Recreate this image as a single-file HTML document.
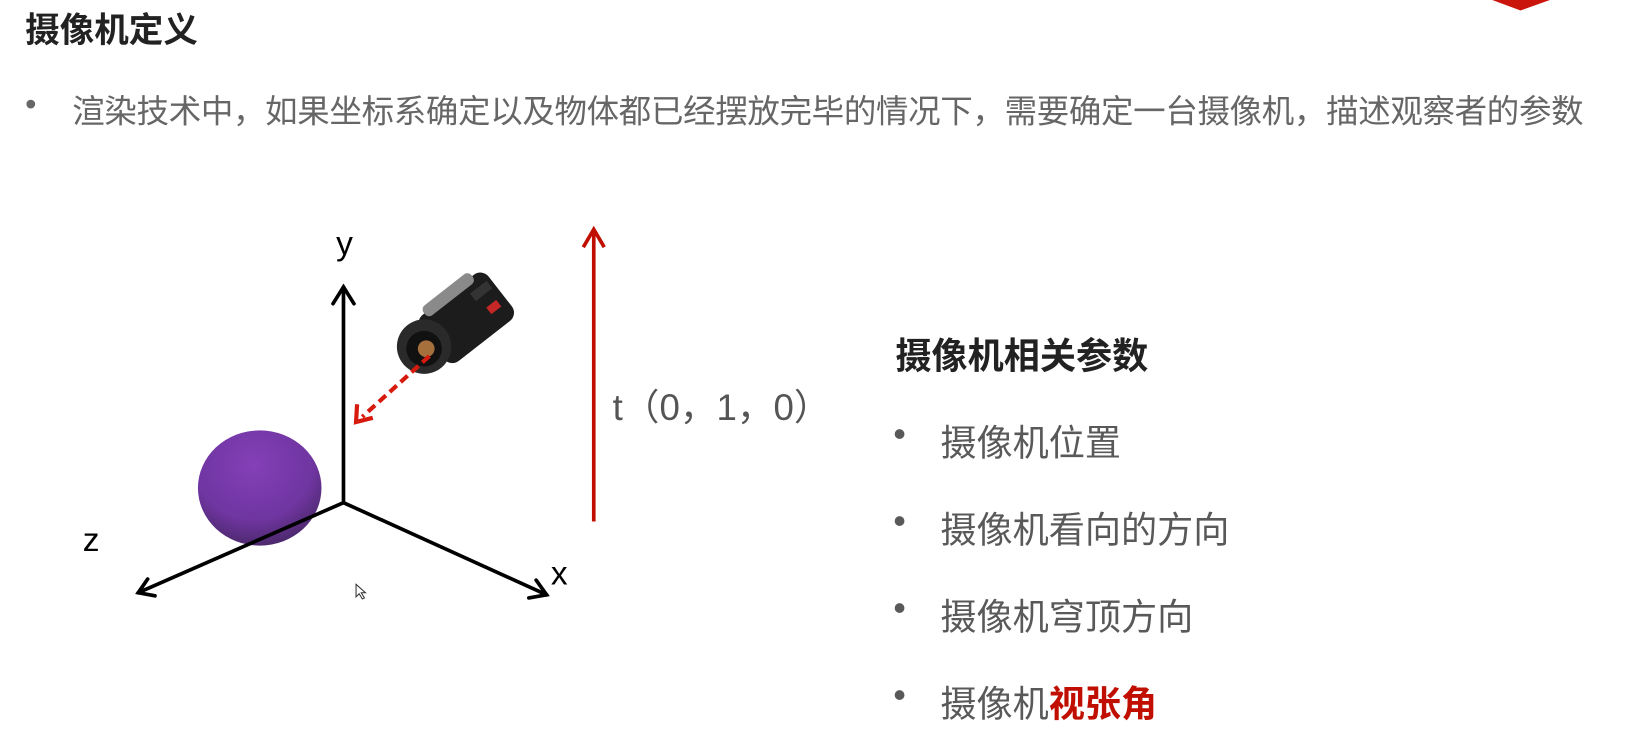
<!DOCTYPE html>
<html><head><meta charset="utf-8"><style>
body{margin:0;width:1642px;height:752px;background:#fff;position:relative;overflow:hidden;font-family:"Liberation Sans","Noto Sans CJK SC",sans-serif}
#w{position:absolute;left:0;top:0;width:1568px;height:718px;transform:scale(1.0472);transform-origin:0 0}
.t{position:absolute;white-space:nowrap}
</style></head><body><div id="w">
<svg width="1568" height="718" style="position:absolute;left:0;top:0">
<defs>
<radialGradient id="sp" cx="0.45" cy="0.3" r="0.8">
<stop offset="0" stop-color="#8440b8"/><stop offset="0.6" stop-color="#6f35a0"/><stop offset="1" stop-color="#3f2458"/></radialGradient>
</defs>
<polygon points="1425,0 1480,0 1452,10" fill="#c9150c"/>
<ellipse cx="248" cy="466" rx="59" ry="55" fill="url(#sp)"/>
<g stroke="#000" stroke-width="3.5" fill="none" stroke-linecap="round">
<line x1="328" y1="480" x2="328" y2="274"/><path d="M318,290 L328,274 L338,290"/>
<line x1="328" y1="480" x2="522" y2="568"/><path d="M505,571 L522,568 L512,554"/>
<line x1="328" y1="480" x2="132" y2="566"/><path d="M148,569 L132,566 L141,553"/>
</g>
<line x1="567" y1="498" x2="567" y2="220" stroke="#c00f00" stroke-width="3.5"/>
<path d="M557,236 L567,219 L577,236" stroke="#c00f00" stroke-width="3.5" fill="none"/>
<g transform="translate(430,318) rotate(-38)">
<rect x="-20" y="-30" width="82" height="56" rx="10" fill="#1c1c1c"/>
<rect x="-8" y="-36" width="58" height="12" rx="5" fill="#8a8a8a"/>
<rect x="38" y="-18" width="20" height="9" fill="#333"/>
<rect x="42" y="2" width="12" height="8" fill="#c62828"/>
</g>
<circle cx="405" cy="331" r="26" fill="#2a2a2a"/>
<circle cx="405" cy="333" r="17" fill="#111"/>
<circle cx="407" cy="333" r="8" fill="#a5703c"/>
<line x1="410" y1="340" x2="346" y2="398" stroke="#d71a0e" stroke-width="4" stroke-dasharray="9,5"/>
<path d="M341,386 L340,403 L356,399" stroke="#d71a0e" stroke-width="4" fill="none"/>
<path d="M340,558 l0,12 l3,-3 l3,5 l2,-1 l-3,-5 l4,0z" fill="#fff" stroke="#333" stroke-width="1"/>
</svg>
<div class="t" style="left:24px;top:2px;font-size:33px;font-weight:bold;color:#222">摄像机定义</div>
<div class="t" style="left:24px;top:82px;font-size:31px;color:#666">•</div>
<div class="t" style="left:69px;top:81px;font-size:31px;letter-spacing:-0.3px;color:#666">渲染技术中，如果坐标系确定以及物体都已经摆放完毕的情况下，需要确定一台摄像机，描述观察者的参数</div>
<div class="t" style="left:321px;top:214px;font-size:32px;color:#000">y</div>
<div class="t" style="left:79px;top:497px;font-size:32px;color:#000">z</div>
<div class="t" style="left:526px;top:529px;font-size:32px;color:#000">x</div>
<div class="t" style="left:585px;top:361px;font-size:35px;color:#555">t（0，1，0）</div>
<div class="t" style="left:855px;top:312px;font-size:34.5px;font-weight:bold;color:#222">摄像机相关参数</div>
<div class="t" style="left:853px;top:396px;font-size:34.5px;color:#595959">•</div>
<div class="t" style="left:898px;top:395px;font-size:34.5px;color:#595959">摄像机位置</div>
<div class="t" style="left:853px;top:479px;font-size:34.5px;color:#595959">•</div>
<div class="t" style="left:898px;top:478px;font-size:34.5px;color:#595959">摄像机看向的方向</div>
<div class="t" style="left:853px;top:562px;font-size:34.5px;color:#595959">•</div>
<div class="t" style="left:898px;top:561px;font-size:34.5px;color:#595959">摄像机穹顶方向</div>
<div class="t" style="left:853px;top:645px;font-size:34.5px;color:#595959">•</div>
<div class="t" style="left:898px;top:644px;font-size:34.5px;color:#595959">摄像机<b style="color:#c00f00">视张角</b></div>
</div></body></html>
